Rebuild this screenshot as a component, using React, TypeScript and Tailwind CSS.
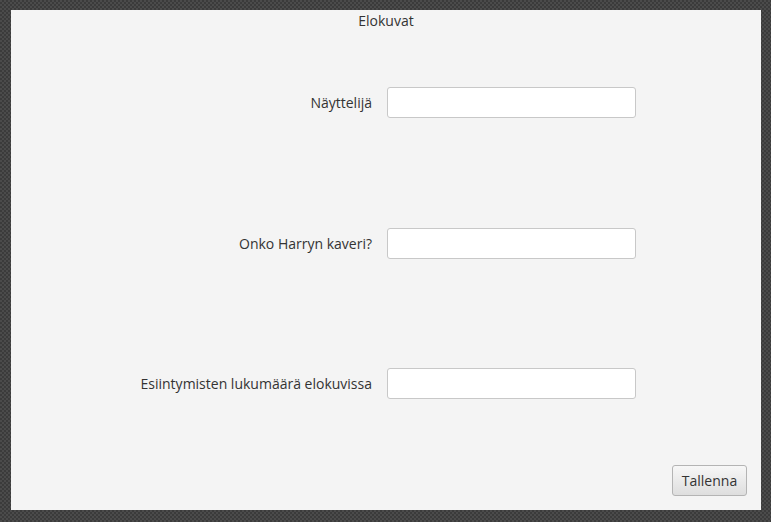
export default function App() {
  const rows = [
    { label: "Näyttelijä", mt: "mt-[58px]" },
    { label: "Onko Harryn kaveri?", mt: "mt-[110px]" },
    { label: "Esiintymisten lukumäärä elokuvissa", mt: "mt-[109px]" },
  ];

  return (
    <div className="w-[771px] h-[522px] pt-[10px] pl-[11px] bg-[#444444] bg-[repeating-conic-gradient(#3b3b3b_0%_25%,#4b4b4b_0%_50%)] bg-[length:4px_4px] font-['Open_Sans',sans-serif] text-[14px] text-[#333333]">
      <div className="w-[750px] h-[500px] bg-[#f4f4f4] flex flex-col">
        {/* Title */}
        <div className="pt-[2px] text-center leading-[17px]">Elokuvat</div>

        {/* Form rows */}
        {rows.map((row) => (
          <div key={row.label} className={`${row.mt} flex items-center`}>
            <div className="w-[361px] text-right leading-[17px]">{row.label}</div>
            <input
              type="text"
              className="ml-[15px] w-[249px] h-[31px] bg-white border border-[#c8c8c8] rounded-[3px] outline-none px-2"
            />
          </div>
        ))}

        {/* Save button */}
        <div className="mt-auto mb-[14px] mr-[14px] flex justify-end">
          <button className="w-[75px] h-[31px] rounded-[3px] border border-[#b4b4b4] bg-gradient-to-b from-[#f7f7f7] to-[#dedede] text-[#333333] leading-[17px]">
            Tallenna
          </button>
        </div>
      </div>
    </div>
  );
}
